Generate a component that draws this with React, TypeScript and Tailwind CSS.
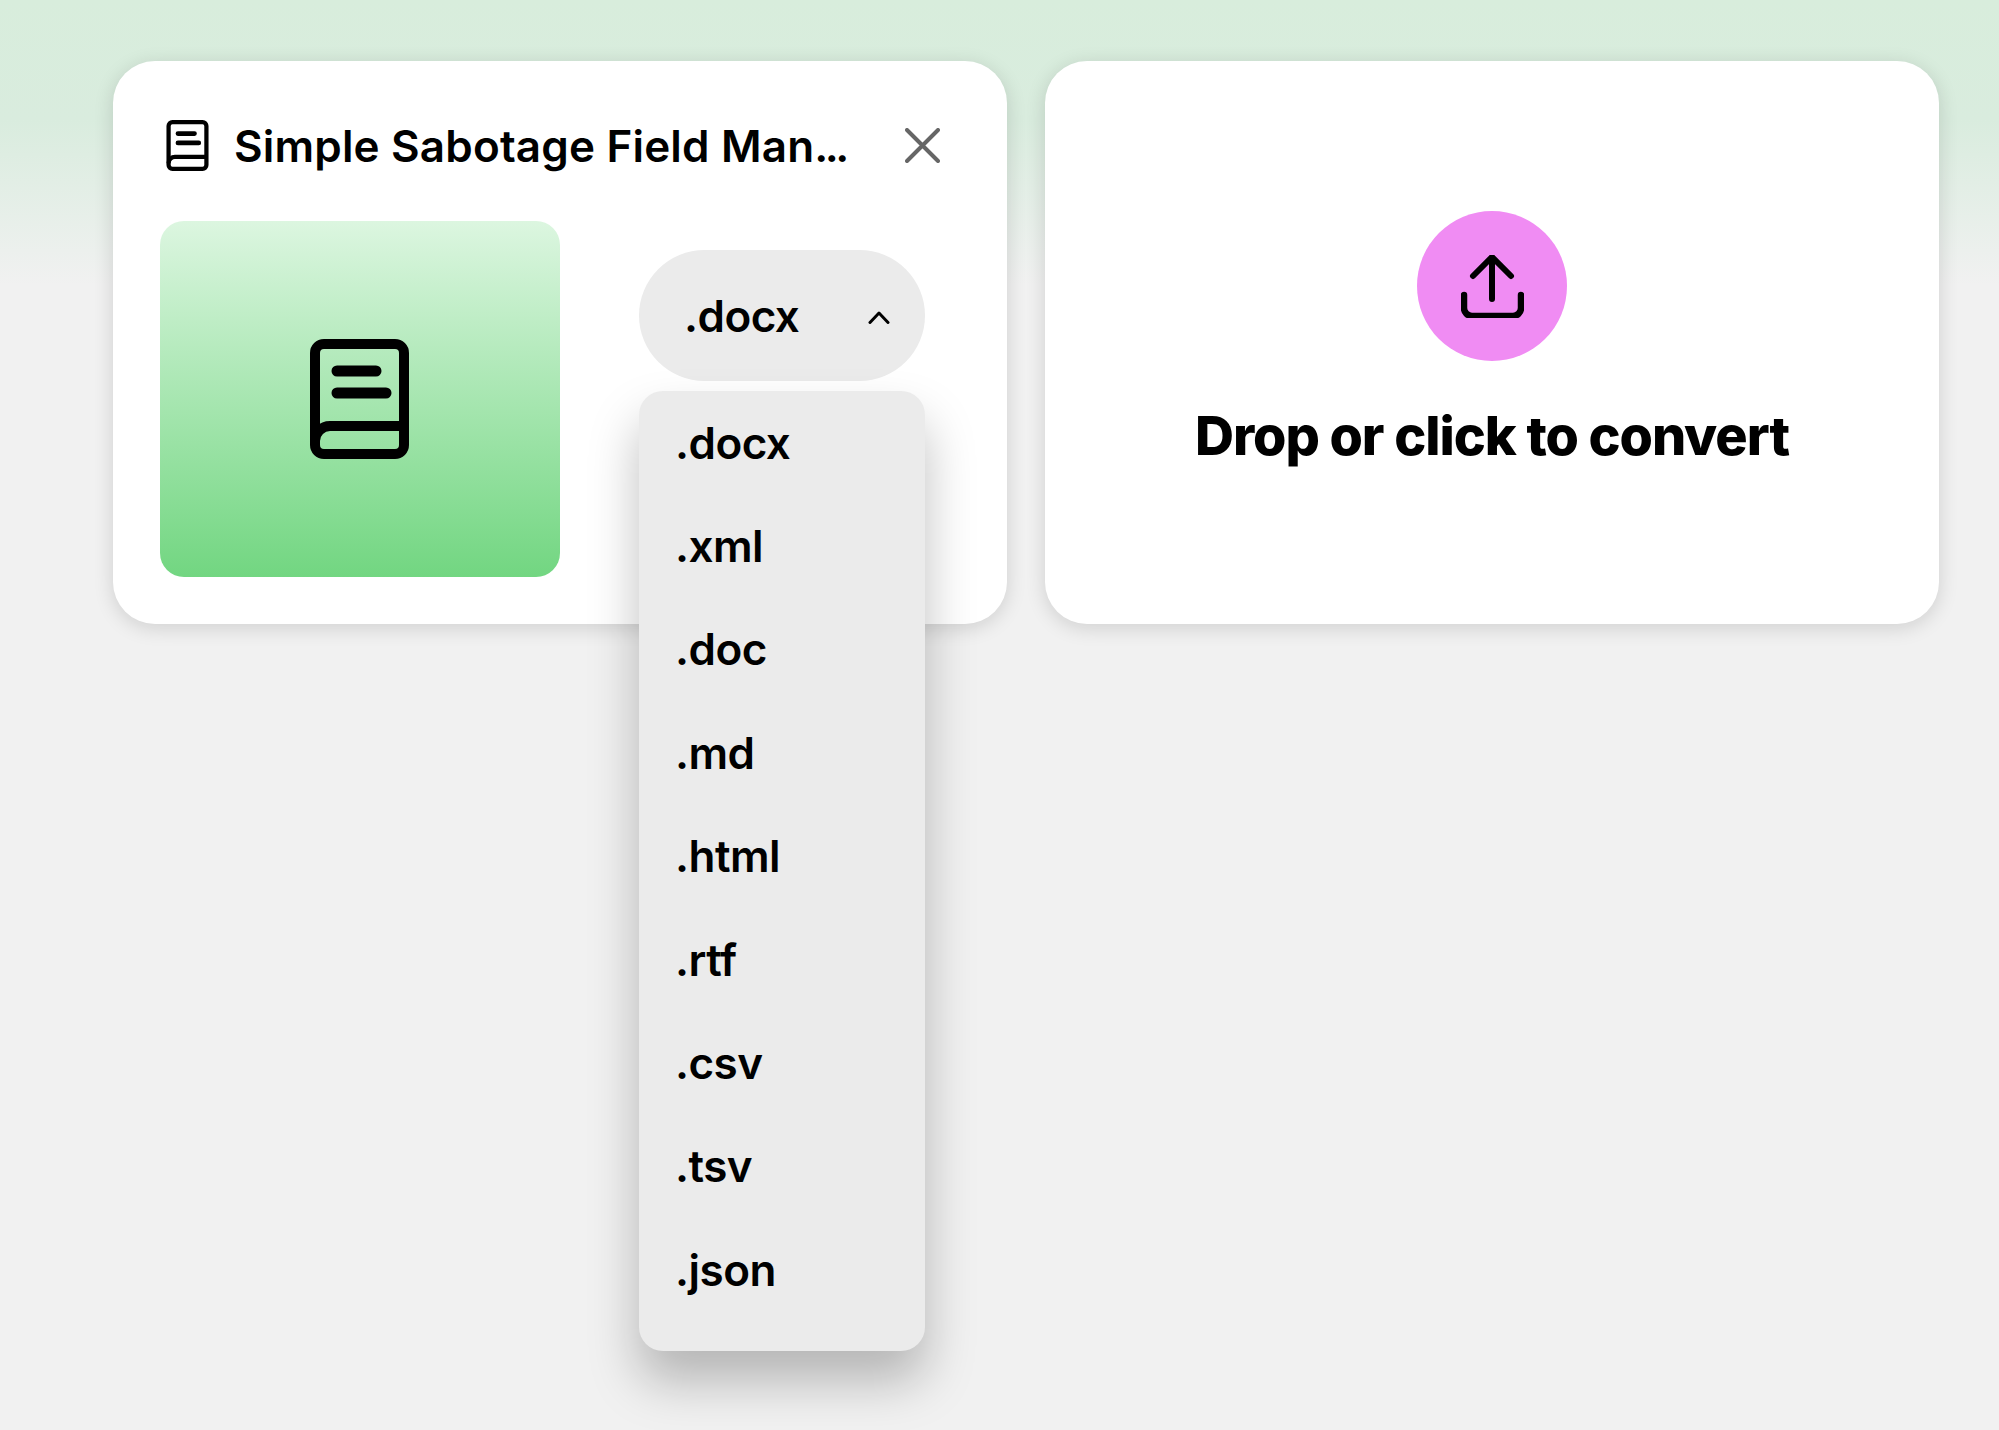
const FORMATS = ['.docx', '.xml', '.doc', '.md', '.html', '.rtf', '.csv', '.tsv', '.json'];

function BookIcon({ className, strokeWidth }: { className: string; strokeWidth: number }) {
  return (
    <svg viewBox="0 0 99 120" fill="none" stroke="currentColor" strokeWidth={strokeWidth} className={className}>
      <rect x="5" y="5" width="89" height="110" rx="9" />
      <path d="M5 102a15 15 0 0 1 15-15h74" />
      <path d="M27 32h39M27 54h49" strokeLinecap="round" strokeWidth={strokeWidth + 1} />
    </svg>
  );
}

function CloseIcon() {
  return (
    <svg viewBox="0 0 35 35" fill="none" stroke="#666666" strokeWidth={4} strokeLinecap="round" className="h-[35px] w-[35px] shrink-0">
      <path d="M2 2l31 31M33 2L2 33" />
    </svg>
  );
}

function ChevronUp() {
  return (
    <svg viewBox="0 0 22 13" fill="none" stroke="black" strokeWidth={3} strokeLinecap="round" strokeLinejoin="round" className="mt-[3px] h-[13px] w-[22px]">
      <path d="M2 11.5l9-9.5 9 9.5" />
    </svg>
  );
}

function UploadIcon() {
  return (
    <svg viewBox="0 0 63 63" fill="none" stroke="black" strokeLinecap="round" strokeLinejoin="round" className="ml-[1px] h-[63px] w-[63px]">
      <path d="M31 2v42M12 21L31 2l19 19" strokeWidth={6} />
      <path d="M3 40v13a8 8 0 0 0 8 8h41a8 8 0 0 0 8-8V40" strokeWidth={6.5} />
    </svg>
  );
}

export default function App() {
  return (
    <div className="min-h-[1430px] bg-[linear-gradient(to_bottom,#d8eddc_0px,#d9ecde_120px,#f1f1f1_285px)] pl-[113px] pt-[61px] font-['Inter',sans-serif] text-black">
      <div className="flex gap-[38px]">
        {/* file card */}
        <div className="relative h-[563px] w-[894px] shrink-0 rounded-[42px] bg-white px-[47px] pt-[59px] shadow-[0_4px_20px_rgba(0,0,0,0.14)]">
          <div className="flex h-[51px] items-center pl-[6px]">
            <BookIcon className="h-[51px] w-[43px] shrink-0" strokeWidth={10} />
            <span className="ml-[25px] w-[671px] shrink-0 text-[44px] font-semibold leading-none tracking-[0.004em] whitespace-nowrap">
              Simple Sabotage Field Man<span className="tracking-[-0.08em]">...</span>
            </span>
            <CloseIcon />
          </div>
          <div className="mt-[50px] flex">
            <div className="flex h-[356px] w-[400px] items-center justify-center rounded-[24px] bg-[linear-gradient(to_bottom,#dcf6e0,#72d681)]">
              <BookIcon className="mr-[2px] h-[120px] w-[99px]" strokeWidth={10} />
            </div>
            <div className="ml-[79px] w-[286px] pt-[29px]">
              <div className="flex h-[131px] items-center justify-between rounded-full bg-[#ebebeb] pl-[45px] pr-[35px]">
                <span className="text-[44px] font-semibold tracking-[-0.012em]">.docx</span>
                <ChevronUp />
              </div>
              <div className="absolute z-10 mt-[10px] flex h-[960px] w-[286px] flex-col rounded-[24px] bg-[#ebebeb] px-[36px] shadow-[0_30px_50px_rgba(0,0,0,0.25)]">
                {FORMATS.map((f) => (
                  <div key={f} className="flex h-[103.4px] shrink-0 items-center text-[44px] font-semibold tracking-[-0.012em]">
                    {f}
                  </div>
                ))}
              </div>
            </div>
          </div>
        </div>

        {/* drop zone */}
        <div className="flex h-[563px] w-[894px] shrink-0 flex-col items-center rounded-[42px] bg-white pt-[150px] shadow-[0_4px_20px_rgba(0,0,0,0.14)]">
          <div className="flex h-[150px] w-[150px] items-center justify-center rounded-full bg-[#f08cf3]">
            <UploadIcon />
          </div>
          <div className="mt-[44px] text-[54px] font-extrabold leading-[62px] tracking-[-0.02em]">Drop or click to convert</div>
        </div>
      </div>
    </div>
  );
}
